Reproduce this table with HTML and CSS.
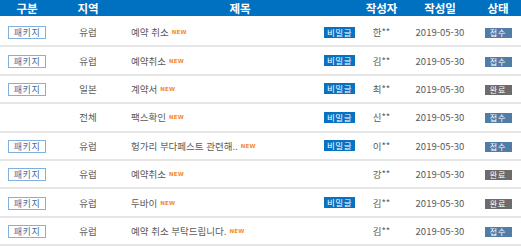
FILE: index.html
```html
<!DOCTYPE html>
<html lang="ko">
<head>
<meta charset="utf-8">
<link rel="stylesheet" href="styles.css">
</head>
<body>
<div class="board">
  <div class="row head">
    <div class="c">구분</div>
    <div class="c">지역</div>
    <div class="c">제목</div>
    <div class="c">작성자</div>
    <div class="c">작성일</div>
    <div class="c">상태</div>
  </div>
  <div class="row first">
    <div class="c"><span class="pkg">패키지</span></div>
    <div class="c">유럽</div>
    <div class="t"><span class="title">예약 취소<span class="new">NEW</span></span><span class="secret">비밀글</span></div>
    <div class="c">한**</div>
    <div class="c">2019-05-30</div>
    <div class="c"><span class="st recv">접수</span></div>
  </div>
  <div class="row">
    <div class="c"><span class="pkg">패키지</span></div>
    <div class="c">유럽</div>
    <div class="t"><span class="title">예약취소<span class="new">NEW</span></span><span class="secret">비밀글</span></div>
    <div class="c">김**</div>
    <div class="c">2019-05-30</div>
    <div class="c"><span class="st recv">접수</span></div>
  </div>
  <div class="row">
    <div class="c"><span class="pkg">패키지</span></div>
    <div class="c">일본</div>
    <div class="t"><span class="title">계약서<span class="new">NEW</span></span><span class="secret">비밀글</span></div>
    <div class="c">최**</div>
    <div class="c">2019-05-30</div>
    <div class="c"><span class="st done">완료</span></div>
  </div>
  <div class="row">
    <div class="c"></div>
    <div class="c">전체</div>
    <div class="t"><span class="title">팩스확인<span class="new">NEW</span></span><span class="secret">비밀글</span></div>
    <div class="c">신**</div>
    <div class="c">2019-05-30</div>
    <div class="c"><span class="st recv">접수</span></div>
  </div>
  <div class="row">
    <div class="c"><span class="pkg">패키지</span></div>
    <div class="c">유럽</div>
    <div class="t"><span class="title">헝가리 부다페스트 관련해..<span class="new">NEW</span></span><span class="secret">비밀글</span></div>
    <div class="c">이**</div>
    <div class="c">2019-05-30</div>
    <div class="c"><span class="st recv">접수</span></div>
  </div>
  <div class="row">
    <div class="c"><span class="pkg">패키지</span></div>
    <div class="c">유럽</div>
    <div class="t"><span class="title">예약취소<span class="new">NEW</span></span></div>
    <div class="c">강**</div>
    <div class="c">2019-05-30</div>
    <div class="c"><span class="st done">완료</span></div>
  </div>
  <div class="row">
    <div class="c"><span class="pkg">패키지</span></div>
    <div class="c">유럽</div>
    <div class="t"><span class="title">두바이<span class="new">NEW</span></span><span class="secret">비밀글</span></div>
    <div class="c">김**</div>
    <div class="c">2019-05-30</div>
    <div class="c"><span class="st done">완료</span></div>
  </div>
  <div class="row">
    <div class="c"><span class="pkg">패키지</span></div>
    <div class="c">유럽</div>
    <div class="t"><span class="title">예약 취소 부탁드립니다.<span class="new">NEW</span></span></div>
    <div class="c">김**</div>
    <div class="c">2019-05-30</div>
    <div class="c"><span class="st recv">접수</span></div>
  </div>
</div>
</body>
</html>
```
FILE: styles.css
```css
html, body {
  margin: 0;
  padding: 0;
  background: #fff;
}
body {
  font-family: "Noto Sans CJK KR", "Noto Sans", sans-serif;
  font-size: 9.5px;
  color: #5a5a5a;
}
.board {
  width: 521px;
}
.row {
  display: grid;
  grid-template-columns: 54px 68px 236px 47px 70px 46px;
  align-items: center;
  height: 28.4px;
  box-sizing: border-box;
  border-bottom: 2px solid #e6e6e6;
}
.row.head {
  height: 16px;
  background: #0070c0;
  color: #fff;
  font-weight: bold;
  font-size: 11.5px;
  border-bottom: 0;
  line-height: 15px;
  padding-top: 0.5px;
  align-items: start;
}
.row.first {
  height: 31.4px;
  padding-top: 3px;
}
.c {
  text-align: center;
  white-space: nowrap;
}
.t {
  display: flex;
  align-items: center;
  justify-content: space-between;
  padding: 0 3px 0 9px;
  white-space: nowrap;
}
.title {
  display: inline-flex;
  align-items: center;
}
.new {
  font-family: "DejaVu Sans", sans-serif;
  font-size: 5.5px;
  font-weight: bold;
  color: #f58a30;
  margin-left: 3px;
  letter-spacing: 0.2px;
}
.pkg {
  display: inline-block;
  border: 1px solid #7fb0e0;
  color: #3d6c9e;
  font-size: 9px;
  line-height: 11px;
  padding: 0 5px;
  letter-spacing: 0.5px;
}
.secret {
  display: inline-block;
  background: #0872c2;
  color: #fff;
  font-size: 8.5px;
  line-height: 11px;
  padding: 0 3px;
  letter-spacing: 0.5px;
}
.st {
  display: inline-block;
  width: 27px;
  color: #fff;
  font-size: 8px;
  line-height: 10px;
  letter-spacing: 1px;
}
.recv {
  background: #507ca8;
}
.done {
  background: #6c6c6c;
}
```
